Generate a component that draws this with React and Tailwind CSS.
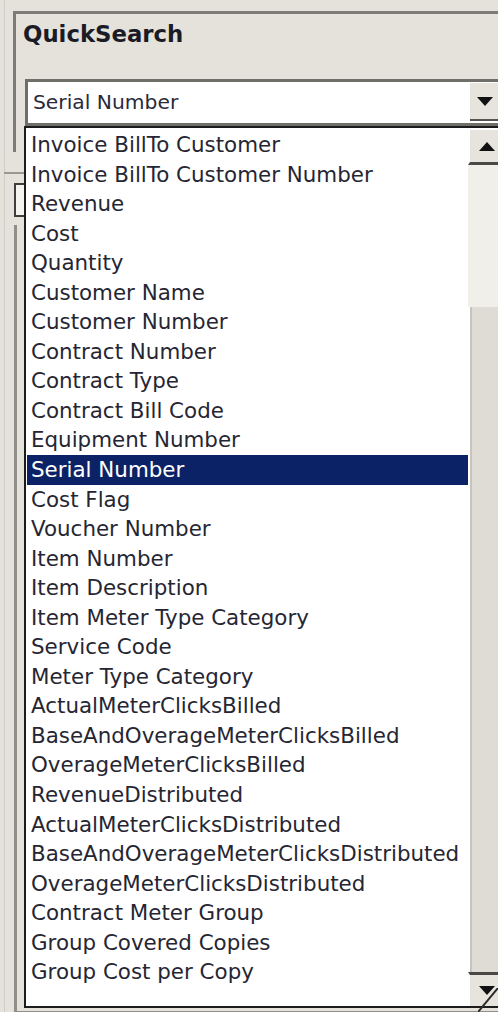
import React from 'react';

const FIELDS = [
  'Invoice BillTo Customer',
  'Invoice BillTo Customer Number',
  'Revenue',
  'Cost',
  'Quantity',
  'Customer Name',
  'Customer Number',
  'Contract Number',
  'Contract Type',
  'Contract Bill Code',
  'Equipment Number',
  'Serial Number',
  'Cost Flag',
  'Voucher Number',
  'Item Number',
  'Item Description',
  'Item Meter Type Category',
  'Service Code',
  'Meter Type Category',
  'ActualMeterClicksBilled',
  'BaseAndOverageMeterClicksBilled',
  'OverageMeterClicksBilled',
  'RevenueDistributed',
  'ActualMeterClicksDistributed',
  'BaseAndOverageMeterClicksDistributed',
  'OverageMeterClicksDistributed',
  'Contract Meter Group',
  'Group Covered Copies',
  'Group Cost per Copy'
];

const SELECTED = 'Serial Number';

const Arrow = ({ up = false }) => (
  <svg width="16" height="9" viewBox="0 0 16 9" className="block">
    {up ? <polygon points="0,9 16,9 8,0" fill="#111" /> : <polygon points="0,0 16,0 8,9" fill="#111" />}
  </svg>
);

const ScrollButton = ({ up, className = '' }) => (
  <div className={`flex items-center pl-[9px] bg-[#e6e4dd] border-l-2 border-t-2 border-white ${className}`}>
    <Arrow up={up} />
  </div>
);

export default function App() {
  return (
    <div className="relative w-[498px] h-[1012px] overflow-hidden bg-[#e4e2db] font-['DejaVu_Sans',sans-serif] text-[#262633]">
      {/* form behind the open list */}
      <div className="flex h-full pl-[4px]">
        <div className="w-px h-full bg-[#cfcdc6]" />
        <div className="flex-1 flex flex-col pl-[8px] pt-[11px]">
          {/* QuickSearch group */}
          <div className="h-[141px] border-l-[3px] border-t-[3px] border-[#7c7b76] pl-[7px]">
            <div className="mt-[6px] text-[22.8px] leading-[28px] font-bold text-[#1b1b26]">QuickSearch</div>
            <div className="mt-[31px] ml-[2px] h-[47px] flex border-l-[3px] border-t-[3px] border-b-[3px] border-[#6f6e69] bg-white">
              <div className="flex-1 pl-[5px] text-[20.3px] leading-[41px] text-[#2a2a3a]">Serial Number</div>
              <div className="w-[28px] flex items-center pl-[7px] bg-[#e6e4dd] border-b-2 border-[#55544f] mb-[2px] mt-[1px]">
                <Arrow />
              </div>
            </div>
          </div>
          {/* lower panel */}
          <div className="mt-[20px] -ml-[9px] flex-1 border-t-2 border-[#9a9891] pl-[10px] pt-[9px] flex flex-col">
            <div className="h-[34px] border-2 border-[#3e3e3c] bg-[#f4f3ef]" />
            <div className="mt-[8px] flex-1 border-l-[3px] border-b border-[#8f8e89]" />
          </div>
        </div>
      </div>

      {/* open dropdown list */}
      <div className="absolute left-[24px] right-0 top-[126px] bottom-[4px] flex bg-white border-l-2 border-t-2 border-b-2 border-[#1c1c1c]">
        <div className="flex-1 pt-[2px] pl-[1px]">
          {FIELDS.map((f) => (
            <div
              key={f}
              className={`h-[29.55px] pl-[4px] text-[21.4px] leading-[29.55px] whitespace-nowrap ${
                f === SELECTED ? 'bg-[#0b2366] text-white' : ''
              }`}
            >
              {f}
            </div>
          ))}
        </div>
        <div className="w-[30px] flex flex-col">
          <ScrollButton up className="h-[37px] border-b-[3px] border-b-[#4a4945]" />
          <div className="h-[142px] bg-[#f1efea]" />
          <div className="flex-1 flex bg-[#dedcd5]">
            <div className="w-[2px] bg-white" />
            <div className="w-[2px] bg-[#c6c4bd]" />
          </div>
          <ScrollButton className="h-[34px] border-t-[3px] border-t-[#4a4945]" />
        </div>
      </div>

      <svg className="absolute right-0 bottom-0" width="20" height="24" viewBox="0 0 20 24">
        <line x1="0" y1="24" x2="20" y2="0" stroke="#2a2a2a" strokeWidth="2" />
      </svg>
    </div>
  );
}
